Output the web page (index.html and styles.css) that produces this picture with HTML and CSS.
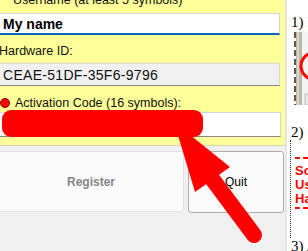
FILE: index.html
```html
<!DOCTYPE html>
<html lang="en">
<head>
    <meta charset="UTF-8">
    <title>Registration</title>
    <link rel="stylesheet" href="styles.css">
</head>
<body>
    <div class="app">
        <div class="form">
            <div class="label user">Username (at least 5 symbols)</div>
            <div class="field name">My name</div>

            <div class="label hw">Hardware ID:</div>
            <div class="field hwid">CEAE-51DF-35F6-9796</div>

            <div class="label act"><span class="dot"></span>Activation Code (16 symbols):</div>
            <div class="field code"></div>
        </div>
        <div class="buttons">
            <button class="btn register" disabled>Register</button>
            <button class="btn quit">Quit</button>
        </div>
    </div>

    <div class="doc">
        <div class="step n1">1) Ins</div>
        <svg class="pic" width="15" height="73" viewBox="0 0 15 73">
            <rect x="0" y="0" width="15" height="73" fill="#fff"/>
            <line x1="1" y1="0" x2="1" y2="73" stroke="#222" stroke-width="1.5" stroke-dasharray="6 3"/>
            <rect x="2" y="0" width="6" height="73" fill="#b9b6a4"/>
            <rect x="3" y="0" width="2" height="73" fill="#d8d6c8"/>
            <rect x="8" y="0" width="7" height="73" fill="#f4f4f4"/>
            <ellipse cx="22" cy="34" rx="15" ry="14" fill="none" stroke="#f00" stroke-width="3"/>
            <rect x="11" y="62" width="4" height="11" fill="#e8e8e8" stroke="#bbb"/>
        </svg>
        <div class="step n2">2) Se</div>
        <div class="notes">
            <div class="dash"></div>
            <div class="red">Solution</div>
            <div class="red">User</div>
            <div class="red">Hardware</div>
            <div class="dash last"></div>
        </div>
        <div class="step n3">3) Ac</div>
    </div>

    <svg class="mark" width="308" height="251" viewBox="0 0 308 251">
        <rect x="2" y="110" width="201" height="27" rx="9" fill="#f00"/>
        <polygon points="174,122 195,192 230,167" fill="#f00"/>
        <line x1="210" y1="176" x2="254" y2="235" stroke="#f00" stroke-width="16" stroke-linecap="round"/>
    </svg>
</body>
</html>
```

FILE: styles.css
```css
body {
    margin: 0;
    width: 308px;
    height: 251px;
    overflow: hidden;
    display: flex;
    position: relative;
    font-family: "Liberation Sans", Arial, sans-serif;
    background: #f0f0f0;
}

.app {
    width: 285px;
    flex-shrink: 0;
    background: #f0f0f0;
}

.form {
    margin-top: -7px;
    margin-left: -4px;
    width: 289px;
    padding-bottom: 8px;
    background: #ffff99;
    border-bottom: 1px solid #d6d6b0;
}

.label {
    font-size: 12.5px;
    line-height: 14px;
    height: 14px;
    color: #111;
    white-space: nowrap;
}

.label.user {
    padding-left: 17px;
}

.label.hw {
    margin-top: 9px;
    padding-left: 3px;
}

.label.act {
    margin-top: 10px;
    padding-left: 4px;
    display: flex;
    align-items: center;
}

.dot {
    width: 10px;
    height: 10px;
    border-radius: 50%;
    background: #f00;
    border: 1px solid #700;
    box-sizing: border-box;
    margin-right: 5px;
}

.field {
    margin-right: 5px;
    box-sizing: border-box;
    white-space: nowrap;
    overflow: hidden;
}

.field.name {
    margin-top: 6px;
    height: 22px;
    background: #fff;
    border: 1px solid #d4d4d4;
    border-bottom: 2px solid #0a62c2;
    padding-left: 6px;
    font-size: 14px;
    font-weight: bold;
    line-height: 20px;
    color: #000;
}

.field.hwid {
    margin-top: 5px;
    height: 23px;
    background: #f0f0f0;
    border: 1px solid #d9d9d9;
    border-bottom: 1px solid #8a8a8a;
    padding-left: 6px;
    font-size: 14px;
    letter-spacing: 0.3px;
    line-height: 22px;
    color: #111;
}

.field.code {
    margin-top: 2px;
    margin-right: 4px;
    height: 25px;
    background: #fff;
    border: 1px solid #d4d4d4;
    border-bottom: 1px solid #8a8a8a;
}

.buttons {
    display: flex;
    gap: 4px;
    padding-top: 5px;
    margin-left: -2px;
}

.btn {
    height: 61px;
    font-family: "Liberation Sans", Arial, sans-serif;
    font-size: 12px;
    background: #fafafa;
    border-radius: 3px;
    padding: 0;
}

.btn.register {
    width: 186px;
    border: 1px solid #e2e2e2;
    color: #858585;
    font-weight: bold;
}

.btn.quit {
    width: 96px;
    border: 1px solid #adadad;
    color: #000;
    height: 62px;
}

.doc {
    flex: 1;
    background: #fff;
    border-left: 2px solid #e4e4e4;
    padding-left: 4px;
    overflow: hidden;
    white-space: nowrap;
}

.step {
    font-family: "Liberation Serif", "Times New Roman", serif;
    font-size: 15px;
    line-height: 16px;
    color: #000;
}

.n1 {
    margin-top: 14px;
}

.pic {
    display: block;
    margin-top: 2px;
    margin-left: 3px;
}

.n2 {
    margin-top: 19px;
}

.notes {
    margin-left: -1px;
    border-left: 1px dotted #333;
    padding-left: 4px;
    padding-top: 17px;
    height: 81px;
}

.dash {
    height: 0;
    border-top: 2px dashed #f00;
}

.dash.last {
    margin-top: 1px;
}

.red {
    font-size: 13px;
    font-weight: bold;
    line-height: 14px;
    color: #f00;
}

.dash + .red {
    margin-top: 5px;
}

.mark {
    position: absolute;
    left: 0;
    top: 0;
    pointer-events: none;
}
```
